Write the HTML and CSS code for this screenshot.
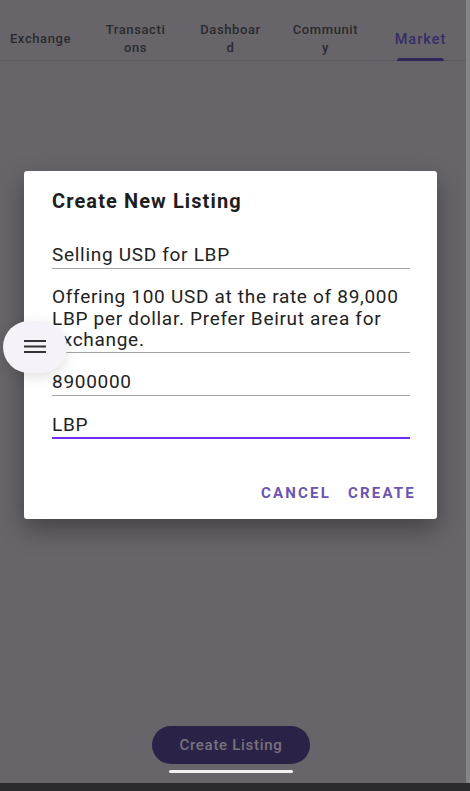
FILE: index.html
```html
<!DOCTYPE html>
<html lang="en">

<head>
  <meta charset="UTF-8">
  <meta name="viewport" content="width=device-width, initial-scale=1.0">
  <title>Market</title>
  <link rel="stylesheet" href="styles.css">
</head>

<body>
  <div class="screen">
    <div class="frame">
      <div class="app">
        <div class="tabs">
          <div class="tab">Exchange</div>
          <div class="tab">Transacti<br>ons</div>
          <div class="tab">Dashboar<br>d</div>
          <div class="tab">Communit<br>y</div>
          <div class="tab active">Market</div>
        </div>

        <div class="main">
          <div class="dialog">
            <div class="dialog-title">Create New Listing</div>
            <div class="field">Selling USD for LBP</div>
            <div class="field multi">Offering 100 USD at the rate of 89,000 LBP per dollar. Prefer Beirut area for exchange.</div>
            <div class="field">8900000</div>
            <div class="field focused">LBP</div>
            <div class="actions">
              <button class="text-btn">Cancel</button>
              <button class="text-btn">Create</button>
            </div>
          </div>

          <div class="footer">
            <button class="create-btn">Create Listing</button>
            <div class="home-bar"></div>
          </div>
        </div>

        <!-- floating menu button -->
        <div class="menu-fab">
          <svg width="22" height="14" viewBox="0 0 22 14">
            <rect x="0" y="0" width="22" height="2" fill="#333"/>
            <rect x="0" y="5.5" width="22" height="2" fill="#333"/>
            <rect x="0" y="11" width="22" height="2" fill="#333"/>
          </svg>
        </div>
      </div>
      <div class="edge"></div>
    </div>
    <div class="bottom-strip"></div>
  </div>
</body>

</html>
```

FILE: styles.css
```css
body {
  margin: 0;
  font-family: Roboto, "Liberation Sans", Arial, sans-serif;
}

.screen {
  width: 470px;
  height: 791px;
  display: flex;
  flex-direction: column;
  overflow: hidden;
}

.frame {
  flex: 1;
  display: flex;
}

.app {
  position: relative;
  width: 466px;
  background-color: #676569;
  display: flex;
  flex-direction: column;
}

.edge {
  width: 4px;
  background-color: #848387;
}

.bottom-strip {
  height: 8px;
  background-color: #2b2b2f;
}

.tabs {
  height: 42px;
  padding-top: 18px;
  border-bottom: 1px solid #5c5a5e;
  display: grid;
  grid-template-columns: repeat(5, 95px);
  margin-left: -7px;
}

.tab {
  display: flex;
  align-items: center;
  justify-content: center;
  text-align: center;
  font-size: 13px;
  font-weight: 500;
  line-height: 18px;
  letter-spacing: 0.6px;
  color: #2b2a2e;
  position: relative;
}

.tab.active {
  color: #372d66;
  font-size: 14.5px;
  letter-spacing: 1px;
  padding-top: 2px;
}

.tab.active::after {
  content: "";
  position: absolute;
  left: 24px;
  right: 24px;
  bottom: -1px;
  height: 3px;
  border-radius: 3px 3px 0 0;
  background-color: #2e2659;
}

.main {
  flex: 1;
  display: flex;
  flex-direction: column;
}

.dialog {
  margin: 110px 0 0 24px;
  width: 413px;
  height: 348px;
  box-sizing: border-box;
  padding: 18px 27px 0 28px;
  background-color: #fff;
  border-radius: 3px;
  box-shadow: 0 10px 24px rgba(0, 0, 0, 0.35);
}

.dialog-title {
  font-size: 20px;
  font-weight: 700;
  line-height: 24px;
  letter-spacing: 1.1px;
  color: #1e1e1e;
  margin-bottom: 30px;
}

.field {
  font-size: 19px;
  line-height: 24px;
  letter-spacing: 0.7px;
  color: #222;
  padding-bottom: 1px;
  border-bottom: 1px solid #a3a3a3;
  margin-bottom: 17px;
}

.field.multi {
  line-height: 21.5px;
  margin-top: 1px;
}

.field.focused {
  border-bottom: 2px solid #6f2cf4;
  padding-bottom: 0;
}

.actions {
  display: flex;
  justify-content: flex-end;
  gap: 1px;
  margin: 36px -14px 0 0;
}

.text-btn {
  height: 36px;
  padding: 0 8px;
  background: none;
  border: none;
  font-family: inherit;
  font-size: 15px;
  font-weight: 700;
  letter-spacing: 2.2px;
  text-transform: uppercase;
  color: #6a55b0;
  cursor: pointer;
}

.footer {
  margin-top: auto;
  padding-bottom: 10px;
  display: flex;
  flex-direction: column;
  align-items: center;
  gap: 6px;
  margin-left: -4px;
}

.create-btn {
  width: 158px;
  height: 38px;
  border: none;
  border-radius: 19px;
  background-color: #2b2247;
  color: #77737f;
  font-family: inherit;
  font-size: 15px;
  font-weight: 500;
  letter-spacing: 0.7px;
}

.home-bar {
  width: 124px;
  height: 3px;
  border-radius: 2px;
  background-color: #f2f2f2;
}

.menu-fab {
  position: absolute;
  left: 3px;
  top: 321px;
  width: 64px;
  height: 52px;
  border-radius: 26px;
  background-color: #f5f3f9;
  box-shadow: 0 4px 14px rgba(0, 0, 0, 0.12);
  display: flex;
  align-items: center;
  justify-content: center;
}
```
